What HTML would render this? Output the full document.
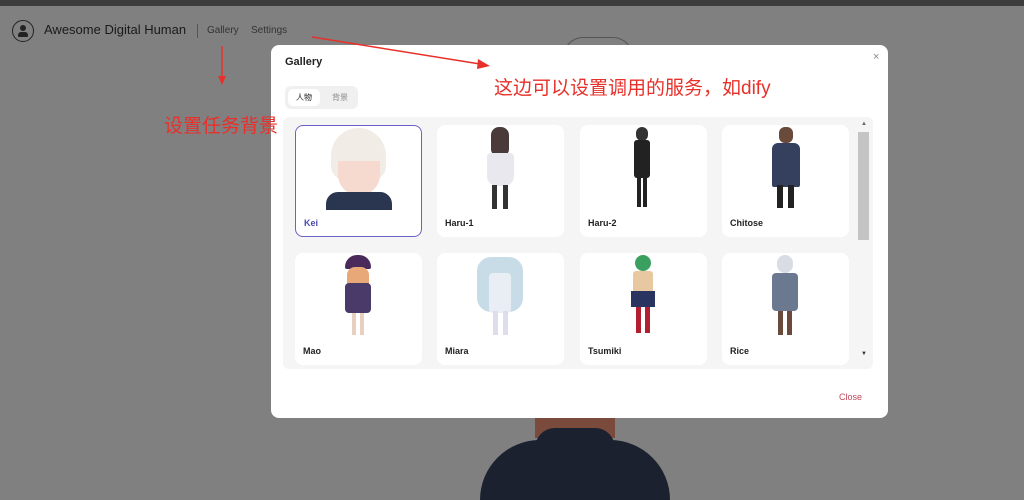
<!DOCTYPE html>
<html><head><meta charset="utf-8"><style>
*{margin:0;padding:0;box-sizing:border-box}
body{width:1024px;height:473px;background:#808080;position:relative;overflow:hidden;font-family:"Liberation Sans","Noto Sans CJK SC",sans-serif}
.top{position:absolute;left:0;top:0;width:1024px;height:6px;background:#3c3c3c}
.abs{position:absolute}
.card{position:absolute;width:127px;height:112px;background:#fff;border-radius:8px;overflow:hidden}
.card .lbl{position:absolute;left:8px;top:93px;font-size:9px;font-weight:bold;color:#222}
.cn{font-family:"Liberation Sans","Noto Sans CJK SC",sans-serif;color:#e8302a}
</style></head><body>
<div class="top"></div>
<div class="abs" style="left:563px;top:37px;width:70px;height:20px;border:1px solid #555;border-bottom:none;border-radius:40px 40px 0 0"></div>
<div class="abs" style="left:535px;top:418px;width:80px;height:20px;background:#7a4a3c"></div>
<div class="abs" style="left:480px;top:440px;width:190px;height:60px;background:#1c2130;border-radius:80px 80px 0 0"></div>
<div class="abs" style="left:535px;top:428px;width:80px;height:40px;background:#1c2130;border-radius:20px 20px 0 0"></div>
<div class="abs" style="left:12px;top:20px;width:22px;height:22px;border:1.5px solid #222;border-radius:50%"></div>
<div class="abs" style="left:20px;top:25px;width:6px;height:6px;background:#222;border-radius:50%"></div>
<div class="abs" style="left:18px;top:32px;width:10px;height:5px;background:#222;border-radius:3px 3px 1px 1px"></div>
<div class="abs" style="left:44px;top:22px;font-size:13px;color:#1a1a1a">Awesome Digital Human</div>
<div class="abs" style="left:197px;top:24px;width:1px;height:14px;background:#555"></div>
<div class="abs" style="left:207px;top:25px;font-size:10px;color:#333">Gallery</div>
<div class="abs" style="left:251px;top:25px;font-size:10px;color:#333">Settings</div>
<!-- modal -->
<div class="abs" style="left:271px;top:45px;width:617px;height:373px;background:#fff;border-radius:8px"></div>
<div class="abs" style="left:285px;top:56px;font-size:11px;font-weight:bold;color:#222">Gallery</div>
<div class="abs" style="left:873px;top:51px;font-size:11px;color:#888">×</div>
<div class="abs" style="left:285px;top:86px;width:73px;height:23px;background:#f0f0f0;border-radius:6px"></div>
<div class="abs" style="left:288px;top:89px;width:32px;height:17px;background:#fff;border-radius:5px;font-size:8px;color:#222;text-align:center;line-height:17px">人物</div>
<div class="abs" style="left:324px;top:89px;width:32px;height:17px;font-size:8px;color:#888;text-align:center;line-height:17px">背景</div>
<div class="abs" style="left:283px;top:117px;width:590px;height:252px;background:#f5f5f5;border-radius:6px"></div>
<div class="abs" style="left:858px;top:132px;width:11px;height:108px;background:#c4c4c4"></div>
<div class="abs" style="left:861px;top:121px;font-size:6px;color:#666">▲</div>
<div class="abs" style="left:861px;top:351px;font-size:6px;color:#333">▼</div>
<div class="card" style="left:295px;top:125px;border:1.5px solid #6b62c9">
 <div class="abs" style="left:35px;top:2px;width:55px;height:52px;background:#f1ede6;border-radius:28px 28px 14px 14px"></div>
 <div class="abs" style="left:42px;top:35px;width:42px;height:34px;background:#f6d9cf;border-radius:0 0 20px 20px"></div>
 <div class="abs" style="left:30px;top:66px;width:66px;height:18px;background:#2a3650;border-radius:12px 12px 0 0"></div>
 <div class="lbl" style="color:#4b4bb0;top:92px">Kei</div>
</div>
<div class="card" style="left:437px;top:125px">
 <div class="abs" style="left:54px;top:2px;width:18px;height:30px;background:#4a3a3a;border-radius:8px"></div>
 <div class="abs" style="left:50px;top:28px;width:27px;height:33px;background:#e8e8ee;border-radius:4px 4px 10px 10px"></div>
 <div class="abs" style="left:55px;top:60px;width:5px;height:24px;background:#333"></div>
 <div class="abs" style="left:66px;top:60px;width:5px;height:24px;background:#333"></div>
 <div class="lbl">Haru-1</div>
</div>
<div class="card" style="left:580px;top:125px">
 <div class="abs" style="left:56px;top:2px;width:12px;height:14px;background:#333;border-radius:6px"></div>
 <div class="abs" style="left:54px;top:15px;width:16px;height:38px;background:#222;border-radius:3px"></div>
 <div class="abs" style="left:57px;top:52px;width:4px;height:30px;background:#222"></div>
 <div class="abs" style="left:63px;top:52px;width:4px;height:30px;background:#222"></div>
 <div class="lbl">Haru-2</div>
</div>
<div class="card" style="left:722px;top:125px">
 <div class="abs" style="left:57px;top:2px;width:14px;height:16px;background:#6a4a3a;border-radius:6px"></div>
 <div class="abs" style="left:50px;top:18px;width:28px;height:44px;background:#34405e;border-radius:6px 6px 2px 2px"></div>
 <div class="abs" style="left:55px;top:60px;width:6px;height:23px;background:#222"></div>
 <div class="abs" style="left:66px;top:60px;width:6px;height:23px;background:#222"></div>
 <div class="lbl">Chitose</div>
</div>
<div class="card" style="left:295px;top:253px">
 <div class="abs" style="left:50px;top:2px;width:26px;height:14px;background:#4a2a5a;border-radius:12px 12px 2px 2px"></div>
 <div class="abs" style="left:52px;top:14px;width:22px;height:38px;background:#e8a878;border-radius:8px"></div>
 <div class="abs" style="left:50px;top:30px;width:26px;height:30px;background:#4a3a6a;border-radius:4px"></div>
 <div class="abs" style="left:57px;top:60px;width:4px;height:22px;background:#e8d0c0"></div>
 <div class="abs" style="left:65px;top:60px;width:4px;height:22px;background:#e8d0c0"></div>
 <div class="lbl">Mao</div>
</div>
<div class="card" style="left:437px;top:253px">
 <div class="abs" style="left:40px;top:4px;width:46px;height:55px;background:#c8dce8;border-radius:14px"></div>
 <div class="abs" style="left:52px;top:20px;width:22px;height:40px;background:#e8eef4;border-radius:4px"></div>
 <div class="abs" style="left:56px;top:58px;width:5px;height:24px;background:#dde"></div>
 <div class="abs" style="left:66px;top:58px;width:5px;height:24px;background:#dde"></div>
 <div class="lbl">Miara</div>
</div>
<div class="card" style="left:580px;top:253px">
 <div class="abs" style="left:55px;top:2px;width:16px;height:16px;background:#3aa060;border-radius:8px"></div>
 <div class="abs" style="left:53px;top:18px;width:20px;height:22px;background:#e8c8a0;border-radius:3px"></div>
 <div class="abs" style="left:51px;top:38px;width:24px;height:16px;background:#2a3460"></div>
 <div class="abs" style="left:56px;top:54px;width:5px;height:26px;background:#b02030"></div>
 <div class="abs" style="left:65px;top:54px;width:5px;height:26px;background:#b02030"></div>
 <div class="lbl">Tsumiki</div>
</div>
<div class="card" style="left:722px;top:253px">
 <div class="abs" style="left:55px;top:2px;width:16px;height:18px;background:#d8dce4;border-radius:8px"></div>
 <div class="abs" style="left:50px;top:20px;width:26px;height:38px;background:#6a7890;border-radius:4px"></div>
 <div class="abs" style="left:56px;top:58px;width:5px;height:24px;background:#6a4a3a"></div>
 <div class="abs" style="left:65px;top:58px;width:5px;height:24px;background:#6a4a3a"></div>
 <div class="lbl">Rice</div>
</div>
<div class="abs" style="left:839px;top:392px;font-size:9px;color:#c0485a">Close</div>
<!-- annotations on top -->
<svg class="abs" style="left:0;top:0" width="1024" height="473">
<line x1="222" y1="46" x2="222" y2="78" stroke="#e8302a" stroke-width="1.5"/>
<polygon points="218,76 226,76 222,85" fill="#e8302a"/>
<line x1="312" y1="37" x2="480" y2="64" stroke="#e8302a" stroke-width="1.5"/>
<polygon points="478,59 490,66 477,69" fill="#e8302a"/>
</svg>
<div class="abs cn" style="left:164px;top:111px;font-size:19px">设置任务背景</div>
<div class="abs cn" style="left:494px;top:73px;font-size:19px">这边可以设置调用的服务，如dify</div>
</body></html>
